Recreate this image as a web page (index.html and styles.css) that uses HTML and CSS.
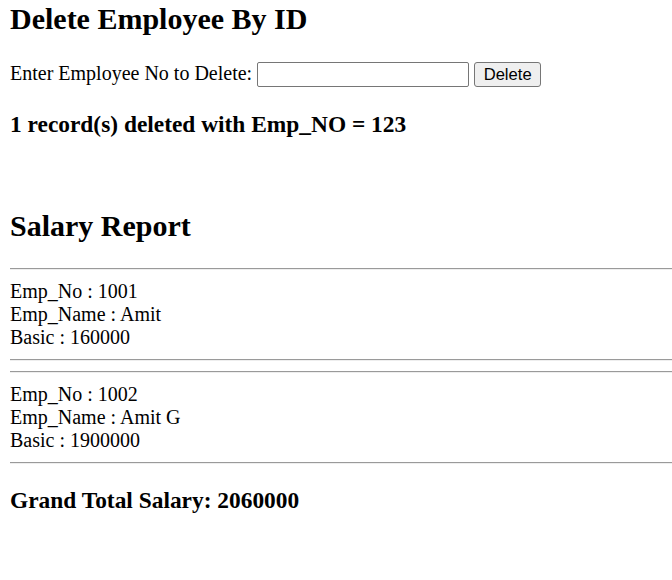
FILE: index.html
```html
<!DOCTYPE html>
<html>
<head>
<meta charset="utf-8">
<title>Delete Employee</title>
<link rel="stylesheet" href="styles.css">
</head>
<body>
<h2 class="title first">Delete Employee By ID</h2>
<form class="del-form">
  Enter Employee No to Delete: <input class="emp-input" type="text"> <input class="del-btn" type="submit" value="Delete">
</form>
<h3 class="msg">1 record(s) deleted with Emp_NO = 123</h3>
<br>
<h2 class="title">Salary Report</h2>
<hr class="rule">
<div class="rec">Emp_No : 1001<br>Emp_Name : Amit<br>Basic : 160000</div>
<hr class="rule">
<hr class="rule">
<div class="rec">Emp_No : 1002<br>Emp_Name : Amit G<br>Basic : 1900000</div>
<hr class="rule">
<h3 class="msg">Grand Total Salary: 2060000</h3>
</body>
</html>
```
FILE: styles.css
```css
html {
  background: #fff;
}
body {
  margin: 0 0 0 10px;
  padding-top: 2px;
  font-family: "Liberation Serif", "Times New Roman", serif;
  font-size: 20px;
  line-height: normal;
  color: #000;
  overflow: hidden;
}
.title {
  font-size: 30px;
  font-weight: bold;
  margin: 24.9px 0;
}
.title.first {
  margin-top: 0;
  margin-bottom: 25.9px;
}
.del-form {
  margin: 0;
}
.emp-input {
  box-sizing: border-box;
  width: 212px;
  height: 25px;
  border: 1px solid #767676;
  border-radius: 2px;
  padding: 1px 3px;
  font-family: "Liberation Sans", Arial, sans-serif;
  font-size: 16.6px;
  vertical-align: baseline;
  background: #fff;
  margin: 0;
}
.del-btn {
  box-sizing: border-box;
  width: 67px;
  height: 25px;
  border: 1px solid #767676;
  border-radius: 3px;
  background: #efefef;
  font-family: "Liberation Sans", Arial, sans-serif;
  font-size: 16.6px;
  color: #000;
  padding: 1px 7px;
  margin: 0;
}
.msg {
  font-size: 23.4px;
  font-weight: bold;
  margin: 23.4px 0;
}
.rule {
  margin: 10px -20px 10px 0;
  height: 0;
  border: none;
  border-top: 1px solid #9a9a9a;
  border-bottom: 1px solid #eeeeee;
}
.rec {
  margin: 0;
}
```
